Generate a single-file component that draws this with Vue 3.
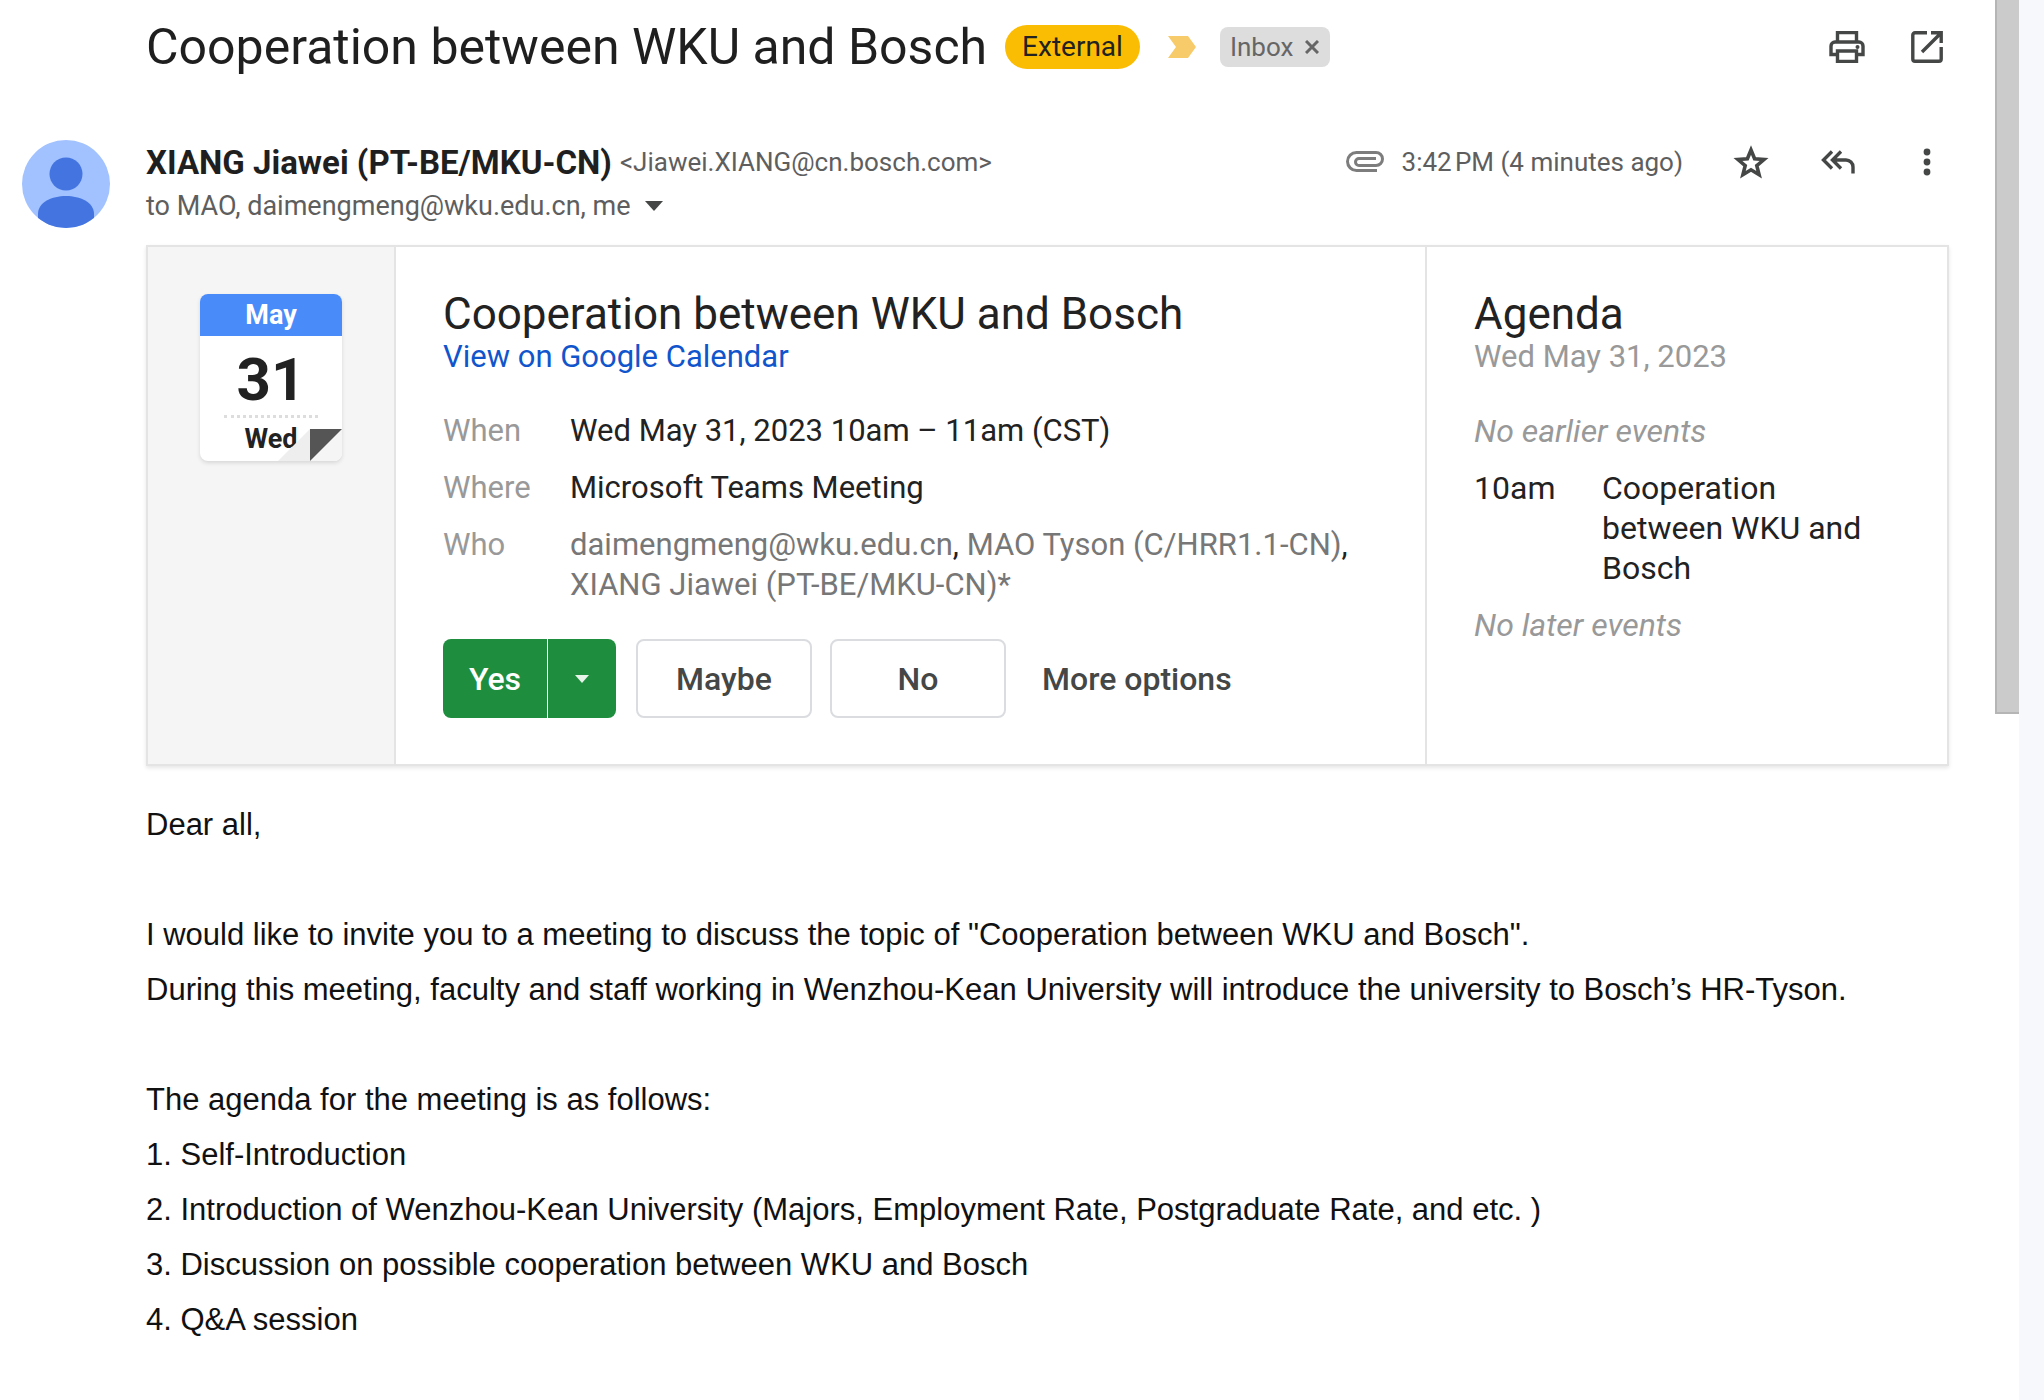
<template>
  <div class="page">
    <main class="mail">
      <header class="subject-row">
        <h1 class="subject">Cooperation between WKU and Bosch</h1>
        <span class="external">External</span>
        <svg class="important" viewBox="0 0 28 22" aria-hidden="true">
          <path d="M0 0h20l8 11-8 11H0l8-11z" fill="#f7cb69" />
        </svg>
        <span class="label">
          Inbox
          <button class="label-close" aria-label="Remove label Inbox">
            <svg viewBox="0 0 14 14">
              <path d="M1 1l12 12M13 1L1 13" fill="none" stroke="#666" stroke-width="3" />
            </svg>
          </button>
        </span>
        <div class="subject-tools">
          <button class="icon-btn" aria-label="Print all">
            <svg viewBox="0 0 36 32" class="ico-print">
              <path
                d="M8.500 10V1.500H27.500V10M8.500 23.500H2V15a4 4 0 0 1 4-4H30a4 4 0 0 1 4 4V23.500H27.500M8.500 20H27.500V30.500H8.500z"
                fill="none" stroke="#444746" stroke-width="3.400"
              />
              <circle cx="28.500" cy="16" r="2" fill="#444746" />
            </svg>
          </button>
          <button class="icon-btn" aria-label="In new window">
            <svg viewBox="0 0 32 32" class="ico-open">
              <path
                d="M16 1.800H4A2.200 2.200 0 0 0 1.800 4V28A2.200 2.200 0 0 0 4 30.200H28A2.200 2.200 0 0 0 30.200 28V16M20 1.800H30.200V12M30 2L11 21"
                fill="none" stroke="#444746" stroke-width="3.400"
              />
            </svg>
          </button>
        </div>
      </header>

      <section class="message">
        <svg class="avatar" viewBox="0 0 88 88" aria-hidden="true">
          <clipPath id="face"><circle cx="44" cy="44" r="44" /></clipPath>
          <g clip-path="url(#face)">
            <rect width="88" height="88" fill="#a1c2ff" />
            <circle cx="44" cy="34" r="16.500" fill="#4374e0" />
            <path d="M16 88V74c0-12 14-18 28-18s28 6 28 18v14z" fill="#4374e0" />
          </g>
        </svg>

        <div class="content">
          <div class="sender-row">
            <span class="sender">XIANG Jiawei (PT-BE/MKU-CN)</span>
            <span class="address">&lt;Jiawei.XIANG@cn.bosch.com&gt;</span>
            <div class="sender-tools">
              <svg viewBox="0 0 38 22" class="ico-clip" aria-hidden="true">
                <path
                  d="M31 19.500H10.500A8.500 8.500 0 0 1 10.500 1.500H30A6.500 6.500 0 0 1 30 14.500H13A3.500 3.500 0 0 1 13 7.500H30"
                  fill="none" stroke="#7d7d7d" stroke-width="3"
                />
              </svg>
              <time class="time">3:42&#8239;PM (4 minutes ago)</time>
              <button class="icon-btn" aria-label="Star">
                <svg viewBox="0 0 36 34" class="ico-star">
                  <path
                    d="M18 5l3.600 8.800 9.400.7-7.200 6.100 2.300 9.100-8.100-4.900-8.100 4.900 2.300-9.100L5 14.500l9.400-.7z"
                    fill="none" stroke="#444746" stroke-width="3.600"
                  />
                </svg>
              </button>
              <button class="icon-btn" aria-label="Reply all">
                <svg viewBox="0 0 34 24" class="ico-reply">
                  <path
                    d="M11 1.500L2.500 10L11 18.500M20 1.500L11.500 10L20 18.500M12 10H25A7 7 0 0 1 32 17V23.500"
                    fill="none" stroke="#444746" stroke-width="3.400"
                  />
                </svg>
              </button>
              <button class="icon-btn" aria-label="More">
                <svg viewBox="0 0 8 28" class="ico-more">
                  <circle v-for="y in [4, 14, 24]" :key="y" cx="4" :cy="y" r="3.400" fill="#444746" />
                </svg>
              </button>
            </div>
          </div>

          <div class="to-row">
            <span>to MAO, daimengmeng@wku.edu.cn, me</span>
            <button class="details" aria-label="Show details">
              <svg viewBox="0 0 18 10"><path d="M0 0h18l-9 10z" fill="#444746" /></svg>
            </button>
          </div>

          <article class="invite">
            <div class="date-col">
              <div class="cal">
                <div class="cal-month">May</div>
                <div class="cal-day">31</div>
                <div class="cal-week">Wed</div>
                <svg class="cal-fold" viewBox="0 0 64 32" aria-hidden="true">
                  <path d="M0 32L32 0V32z" fill="#eee" />
                  <path d="M32 32L64 0V32z" fill="#f5f5f5" />
                  <path d="M32 0H64L32 32z" fill="#555" />
                </svg>
              </div>
            </div>

            <div class="event-col">
              <h2 class="heading">Cooperation between WKU and Bosch</h2>
              <a class="cal-link" href="#">View on Google Calendar</a>
              <dl class="facts">
                <dt>When</dt>
                <dd>Wed May 31, 2023 10am – 11am (CST)</dd>
                <dt>Where</dt>
                <dd>Microsoft Teams Meeting</dd>
                <dt>Who</dt>
                <dd>
                  <template v-for="(guest, i) in guests" :key="guest">
                    <span class="guest">{{ guest }}</span><template v-if="i < guests.length - 1">, </template>
                  </template>
                </dd>
              </dl>
              <div class="rsvp">
                <div class="split">
                  <button class="yes" @click="reply = 'Yes'">Yes</button>
                  <button class="yes-more" aria-label="More ways to join">
                    <svg viewBox="0 0 14 8"><path d="M0 0h14l-7 8z" fill="#e8f3ea" /></svg>
                  </button>
                </div>
                <button class="outline" @click="reply = 'Maybe'">Maybe</button>
                <button class="outline" @click="reply = 'No'">No</button>
                <button class="options">More options</button>
              </div>
            </div>

            <div class="agenda-col">
              <h2 class="heading">Agenda</h2>
              <p class="agenda-date">Wed May 31, 2023</p>
              <p class="none first">No earlier events</p>
              <div class="slot">
                <span>10am</span>
                <span>Cooperation between WKU and Bosch</span>
              </div>
              <p class="none">No later events</p>
            </div>
          </article>

          <div class="body">
            <p v-for="(line, i) in lines" :key="i">{{ line }}</p>
          </div>
        </div>
      </section>
    </main>

    <div class="scroll-track"><div class="scroll-thumb"></div></div>
    <div class="side-edge"></div>
  </div>
</template>

<script setup>
import { ref } from "vue";

const reply = ref("");

const guests = [
  "daimengmeng@wku.edu.cn",
  "MAO Tyson (C/HRR1.1-CN)",
  "XIANG Jiawei (PT-BE/MKU-CN)*",
];

const lines = [
  "Dear all,",
  "",
  'I would like to invite you to a meeting to discuss the topic of "Cooperation between WKU and Bosch".',
  "During this meeting, faculty and staff working in Wenzhou-Kean University will introduce the university to Bosch’s HR-Tyson.",
  "",
  "The agenda for the meeting is as follows:",
  "1. Self-Introduction",
  "2. Introduction of Wenzhou-Kean University (Majors, Employment Rate, Postgraduate Rate, and etc. )",
  "3. Discussion on possible cooperation between WKU and Bosch",
  "4. Q&A session",
];
</script>

<style>
body {
  margin: 0;
  background: #fff;
}
</style>

<style scoped>
.page {
  display: flex;
  min-height: 100vh;
  font-family: Roboto, "Liberation Sans", sans-serif;
  color: #222;
}
h1,
h2,
p,
dl,
dd {
  margin: 0;
  font-weight: 400;
}
button {
  padding: 0;
  border: none;
  background: none;
  font: inherit;
  cursor: pointer;
}
svg {
  display: block;
}
.mail {
  flex: 1;
  min-width: 0;
  padding: 16px 46px 0 22px;
}
.subject-row {
  display: flex;
  align-items: center;
  height: 62px;
  padding-left: 124px;
}
.subject {
  font-size: 50px;
  line-height: 62px;
  color: #1f1f1f;
}
.external {
  margin-left: 18px;
  padding: 0 17px;
  border-radius: 22px;
  background: #fbbc04;
  font-size: 28px;
  line-height: 44px;
}
.important {
  width: 28px;
  height: 22px;
  margin: 0 24px 0 28px;
}
.label {
  display: flex;
  align-items: center;
  gap: 12px;
  padding: 0 11px 0 10px;
  border-radius: 8px;
  background: #ddd;
  color: #666;
  font-size: 26px;
  line-height: 40px;
}
.label-close svg {
  width: 14px;
  height: 14px;
}
.subject-tools {
  display: flex;
  align-items: center;
  gap: 46px;
  margin-left: auto;
  padding-right: 6px;
}
.ico-print {
  width: 36px;
  height: 32px;
}
.ico-open {
  width: 32px;
  height: 32px;
}
.message {
  display: flex;
  align-items: flex-start;
  gap: 36px;
  margin-top: 62px;
}
.avatar {
  flex: none;
  width: 88px;
  height: 88px;
}
.content {
  flex: 1;
  min-width: 0;
}
.sender-row {
  display: flex;
  align-items: center;
  height: 44px;
}
.sender {
  margin-right: 8px;
  font-size: 33px;
  font-weight: 700;
  color: #1f1f1f;
}
.address,
.time {
  font-size: 26px;
  color: #5e5e5e;
}
.sender-tools {
  display: flex;
  align-items: center;
  margin-left: auto;
  padding-right: 18px;
}
.ico-clip {
  width: 38px;
  height: 22px;
  margin-right: 18px;
}
.time {
  margin-right: 50px;
}
.ico-star {
  width: 36px;
  height: 34px;
  margin-right: 52px;
}
.ico-reply {
  width: 34px;
  height: 24px;
  margin-right: 68px;
}
.ico-more {
  width: 8px;
  height: 28px;
}
.to-row {
  display: flex;
  align-items: center;
  gap: 14px;
  height: 44px;
  font-size: 27px;
  color: #5e5e5e;
}
.details svg {
  width: 18px;
  height: 10px;
}
.invite {
  display: flex;
  margin-top: 17px;
  border: 2px solid #e4e4e4;
  box-shadow: 0 2px 4px rgba(0, 0, 0, 0.1);
}
.date-col {
  flex: none;
  width: 246px;
  border-right: 2px solid #e4e4e4;
  background: #f5f5f5;
}
.cal {
  position: relative;
  width: 142px;
  height: 167px;
  margin: 47px auto 0;
  border-radius: 8px;
  background: #fff;
  box-shadow: 0 2px 4px rgba(0, 0, 0, 0.12);
  font-weight: 700;
  text-align: center;
  overflow: hidden;
}
.cal-month {
  background: #4a8bfa;
  color: #fff;
  font-size: 27px;
  line-height: 42px;
}
.cal-day {
  margin: 0 24px;
  padding-top: 8px;
  border-bottom: 3px dotted #ddd;
  font-size: 60px;
  line-height: 71px;
}
.cal-week {
  font-size: 27px;
  line-height: 42px;
}
.cal-fold {
  position: absolute;
  right: 0;
  bottom: 0;
  width: 64px;
  height: 32px;
}
.event-col {
  flex: 1;
  min-width: 0;
  padding: 44px 47px 46px;
}
.agenda-col {
  flex: none;
  width: 426px;
  padding: 44px 47px 46px;
  border-left: 2px solid #e4e4e4;
}
.heading {
  font-size: 44px;
  line-height: 46px;
}
.cal-link,
.agenda-date,
.facts {
  font-size: 31px;
  line-height: 40px;
}
.none,
.slot {
  font-size: 32px;
  line-height: 40px;
}
.cal-link {
  display: inline-block;
  vertical-align: top;
  color: #1155cc;
  text-decoration: none;
}
.facts {
  display: grid;
  grid-template-columns: 127px 1fr;
  row-gap: 17px;
  margin-top: 34px;
}
.facts dt,
.agenda-date,
.none {
  color: #999;
}
.guest {
  color: #777;
}
.rsvp {
  display: flex;
  margin-top: 34px;
  font-size: 32px;
  font-weight: 500;
}
.rsvp button {
  height: 79px;
}
.split {
  display: flex;
  gap: 1px;
  margin-right: 20px;
}
.rsvp .yes,
.rsvp .yes-more {
  background: #1e8e3e;
  color: #fff;
}
.rsvp .yes {
  width: 104px;
  border-radius: 8px 0 0 8px;
}
.rsvp .yes-more {
  display: grid;
  place-items: center;
  width: 68px;
  border-radius: 0 8px 8px 0;
}
.yes-more svg {
  width: 14px;
  height: 8px;
}
.rsvp .outline {
  width: 176px;
  margin-right: 18px;
  border: 2px solid #dadce0;
  border-radius: 8px;
  background: #fff;
  color: #444746;
}
.rsvp .options {
  margin-left: 18px;
  color: #444746;
}
.none {
  font-style: italic;
}
.none.first {
  margin-top: 34px;
}
.slot {
  display: grid;
  grid-template-columns: 128px 1fr;
  margin: 17px 0;
}
.body {
  margin-top: 31px;
  font-family: "Liberation Sans", Arial, sans-serif;
  font-size: 31px;
  line-height: 55px;
  color: #111;
}
.body p {
  min-height: 55px;
}
.scroll-track {
  flex: none;
  width: 24px;
}
.scroll-thumb {
  box-sizing: border-box;
  height: 51vh;
  border: solid #b5b5b5;
  border-width: 0 0 2px 2px;
  background: #cbcbcb;
}
.side-edge {
  flex: none;
  width: 25px;
  background: #f6f8fc;
}
</style>
